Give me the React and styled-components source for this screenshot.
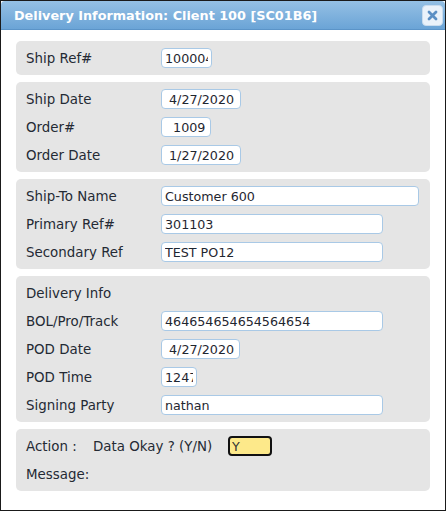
import React from 'react';
import styled, { createGlobalStyle } from 'styled-components';

const GlobalStyle = createGlobalStyle`
  html, body {
    margin: 0;
    padding: 0;
    background: #ffffff;
  }
  * {
    box-sizing: border-box;
  }
`;

const Window = styled.div`
  width: 446px;
  height: 511px;
  border: 1px solid #1a1a1a;
  background: #ffffff;
  font-family: 'DejaVu Sans', Verdana, sans-serif;
  display: flex;
  flex-direction: column;
  overflow: hidden;
`;

const TitleBar = styled.div`
  height: 29px;
  flex-shrink: 0;
  display: flex;
  align-items: center;
  justify-content: space-between;
  padding: 0 2px 0 13px;
  background: linear-gradient(#95c0e4, #6ba4d6);
  border-bottom: 1px solid #5b94c8;
  border-radius: 4px 4px 0 0;
`;

const Title = styled.span`
  color: #ffffff;
  font-size: 12.8px;
  font-weight: bold;
`;

const CloseButton = styled.button`
  width: 21px;
  height: 21px;
  padding: 0;
  border: 1px solid #c9dcee;
  border-radius: 4px;
  background: #eaf2fa;
  display: flex;
  align-items: center;
  justify-content: center;
  cursor: pointer;
`;

const Body = styled.div`
  display: flex;
  flex-direction: column;
  gap: 7px;
  padding: 11px 15px 0 15px;
`;

const Panel = styled.div`
  background: #e5e5e5;
  border-radius: 5px;
  padding: 7px 10px 7px;
  display: flex;
  flex-direction: column;
  gap: 8px;
`;

const Row = styled.div`
  display: flex;
  align-items: center;
  min-height: 20px;
`;

const Label = styled.span`
  width: ${(p) => p.$width || 135}px;
  flex-shrink: 0;
  font-size: 13.4px;
  color: #242a34;
`;

const Input = styled.input`
  width: ${(p) => p.$width}px;
  height: 20px;
  padding: 0 3px;
  border: 1px solid #a9c9e6;
  border-radius: 4px;
  background: #ffffff;
  font-family: 'DejaVu Sans', Verdana, sans-serif;
  font-size: 12.7px;
  color: #1f2630;
  outline: none;
`;

const FlagInput = styled(Input)`
  border: 2px solid #111111;
  background: #fde98a;
  color: #333333;
  padding: 0 2px;
`;

const CloseIcon = () => (
  <svg width="11" height="11" viewBox="0 0 11 11">
    <path d="M2 2 L9 9 M9 2 L2 9" stroke="#5b8fc4" strokeWidth="2.8" strokeLinecap="round" />
  </svg>
);

const Field = ({ label, value, width }) => (
  <Row>
    <Label>{label}</Label>
    <Input $width={width} defaultValue={value} readOnly />
  </Row>
);

export default function App() {
  return (
    <>
      <GlobalStyle />
      <Window>
        <TitleBar>
          <Title>Delivery Information: Client 100 [SC01B6]</Title>
          <CloseButton aria-label="close">
            <CloseIcon />
          </CloseButton>
        </TitleBar>
        <Body>
          <Panel>
            <Field label="Ship Ref#" value="100004" width={51} />
          </Panel>
          <Panel>
            <Field label="Ship Date" value=" 4/27/2020" width={80} />
            <Field label="Order#" value="  1009" width={50} />
            <Field label="Order Date" value=" 1/27/2020" width={80} />
          </Panel>
          <Panel>
            <Field label="Ship-To Name" value="Customer 600" width={258} />
            <Field label="Primary Ref#" value="301103" width={222} />
            <Field label="Secondary Ref" value="TEST PO12" width={222} />
          </Panel>
          <Panel>
            <Row>
              <Label>Delivery Info</Label>
            </Row>
            <Field label="BOL/Pro/Track" value="464654654654564654" width={222} />
            <Field label="POD Date" value=" 4/27/2020" width={79} />
            <Field label="POD Time" value="1247" width={36} />
            <Field label="Signing Party" value="nathan" width={222} />
          </Panel>
          <Panel>
            <Row>
              <Label $width={67}>Action :</Label>
              <Label $width={135}>Data Okay ? (Y/N)</Label>
              <FlagInput $width={44} defaultValue="Y" readOnly />
            </Row>
            <Row>
              <Label>Message:</Label>
            </Row>
          </Panel>
        </Body>
      </Window>
    </>
  );
}
